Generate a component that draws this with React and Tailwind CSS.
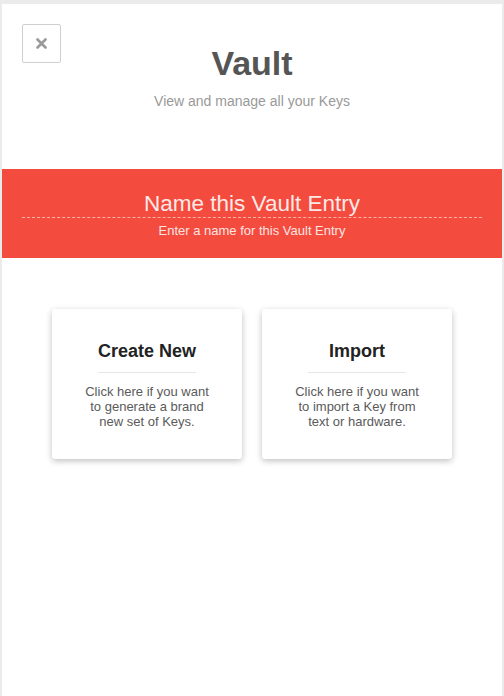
import React from 'react';

const options = [
    { title: 'Create New', lines: ['Click here if you want', 'to generate a brand', 'new set of Keys.'] },
    { title: 'Import', lines: ['Click here if you want', 'to import a Key from', 'text or hardware.'] },
];

const OptionCard = ({ title, lines }) => (
    <button className="w-[190px] h-[150px] bg-white rounded-[3px] shadow-[0_2px_6px_rgba(0,0,0,0.25)] flex flex-col items-center pt-[32px] text-center">
        <div className="text-[18px] font-bold text-[#222] leading-[20px]">{title}</div>
        <div className="w-[98px] h-px bg-[#e6e6e6] mt-[11px] mb-[11px]"></div>
        <div className="text-[13px] text-[#5a5a5a] leading-[15px]">
            {lines.map((l) => (
                <div key={l}>{l}</div>
            ))}
        </div>
    </button>
);

export default function App() {
    return (
        <div className="w-[504px] h-[696px] bg-[#ebebeb] pt-[4px] px-[2px] overflow-hidden font-['Liberation_Sans',Arial,sans-serif]">
            <div className="h-full bg-white relative">
                {/* Close button */}
                <button className="absolute left-[20px] top-[20px] w-[39px] h-[39px] border border-[#cfcfcf] rounded-[2px] flex items-center justify-center">
                    <svg width="11" height="11" viewBox="0 0 11 11">
                        <path d="M1.5 1.5 L9.5 9.5 M9.5 1.5 L1.5 9.5" stroke="#9a9a9a" strokeWidth="2.6" strokeLinecap="round" />
                    </svg>
                </button>

                {/* Header */}
                <div className="flex flex-col items-center pt-[38px]">
                    <h1 className="text-[34px] font-bold text-[#555] leading-[42px]">Vault</h1>
                    <p className="text-[14px] text-[#999] mt-[7px]">View and manage all your Keys</p>
                </div>

                {/* Name banner */}
                <div className="mt-[57px] h-[89px] bg-[#f44b3f] flex flex-col items-center pt-[22px] px-[20px]">
                    <div className="w-full text-center text-[22.5px] text-[#fde9e6] leading-[26px] border-b border-dashed border-[#f9b2aa]">
                        Name this Vault Entry
                    </div>
                    <div className="text-[13px] text-[#fde4e0] mt-[3px]">Enter a name for this Vault Entry</div>
                </div>

                {/* Options */}
                <div className="flex justify-center gap-[20px] mt-[51px]">
                    {options.map((o) => (
                        <OptionCard key={o.title} {...o} />
                    ))}
                </div>
            </div>
        </div>
    );
}
